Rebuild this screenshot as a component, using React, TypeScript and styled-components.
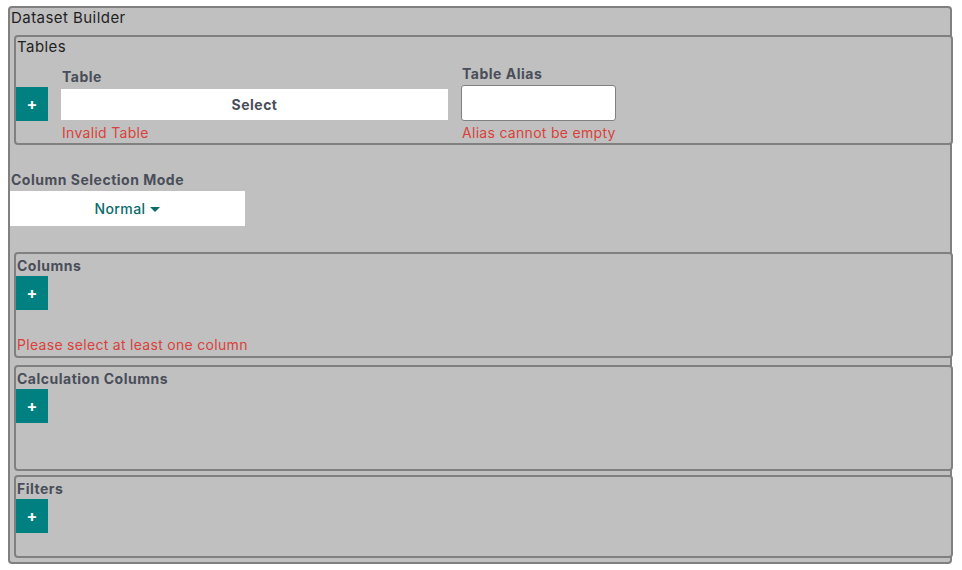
import React, { useState } from 'react'
import styled, { createGlobalStyle } from 'styled-components'

const GlobalStyle = createGlobalStyle`
  html, body {
    margin: 0;
    padding: 0;
    background: #ffffff;
  }
  body {
    font-family: Inter, "Liberation Sans", sans-serif;
    -webkit-font-smoothing: antialiased;
  }
`

const colors = {
  panel: '#c0c0c0',
  border: '#808080',
  label: '#4a4e59',
  text: '#1f1f1f',
  error: '#d9423c',
  teal: '#008080',
  tealText: '#0b6a6a',
}

const Page = styled.div`
  padding: 6px 10px 0 8px;
`

const Builder = styled.div`
  box-sizing: border-box;
  width: 100%;
  background: ${colors.panel};
  border: 2px solid ${colors.border};
  border-radius: 4px;
  padding-bottom: 4px;
`

const Title = styled.div`
  font-size: 15px;
  line-height: 19px;
  letter-spacing: 0.45px;
  color: ${colors.text};
  padding-left: 1px;
`

const Section = styled.div<{ $mt: number; $tail: number }>`
  box-sizing: border-box;
  margin: ${(p) => p.$mt}px -3px 0 4px;
  background: ${colors.panel};
  border: 2px solid ${colors.border};
  border-radius: 4px;
  padding: 3px 0 ${(p) => p.$tail}px 0;
  display: flex;
  flex-direction: column;
  align-items: flex-start;
`

const TablesHeader = styled(Title)`
  margin-top: -3px;
`

const SectionLabel = styled.div`
  font-size: 14px;
  line-height: 17px;
  font-weight: 700;
  letter-spacing: 0.5px;
  color: ${colors.label};
  padding-left: 1px;
`

const AddButton = styled.button<{ $mb?: number }>`
  width: 32px;
  height: 34px;
  margin: 2px 0 ${(p) => p.$mb || 0}px 0;
  padding: 0;
  border: none;
  border-radius: 0;
  background: ${colors.teal};
  color: #ffffff;
  font-family: inherit;
  font-size: 16px;
  font-weight: 700;
  line-height: 1;
  cursor: pointer;
  flex-shrink: 0;
`

const TableRow = styled.div`
  display: flex;
  align-items: flex-end;
  gap: 13px;
  margin-top: 10px;
`

const Field = styled.div<{ $width: number; $labelGap: number }>`
  display: flex;
  flex-direction: column;
  gap: ${(p) => p.$labelGap}px;
  width: ${(p) => p.$width}px;
`

const FieldLabel = styled.label`
  font-size: 14px;
  line-height: 16px;
  font-weight: 700;
  letter-spacing: 0.5px;
  color: ${colors.label};
  padding-left: 1px;
`

const ErrorText = styled.div<{ $mt?: number }>`
  font-size: 14px;
  line-height: 16px;
  letter-spacing: 0.3px;
  color: ${colors.error};
  margin-top: ${(p) => p.$mt || 0}px;
  padding-left: 1px;
  white-space: nowrap;
`

const SelectButton = styled.button`
  height: 31px;
  width: 100%;
  border: none;
  border-radius: 0;
  background: #ffffff;
  font-family: inherit;
  font-size: 14px;
  font-weight: 700;
  letter-spacing: 0.5px;
  color: ${colors.label};
  cursor: pointer;
`

const AliasInput = styled.input`
  box-sizing: border-box;
  height: 36px;
  width: 155px;
  border: 1px solid ${colors.border};
  border-radius: 3px;
  background: #ffffff;
  font-family: inherit;
  font-size: 14px;
  padding: 0 6px;
  outline: none;
`

const ModeBlock = styled.div`
  margin-top: 27px;
  display: flex;
  flex-direction: column;
  gap: 3px;
`

const ModeButton = styled.button`
  width: 235px;
  height: 35px;
  border: none;
  border-radius: 0;
  background: #ffffff;
  font-family: inherit;
  font-size: 14px;
  font-weight: 500;
  letter-spacing: 0.4px;
  color: ${colors.tealText};
  display: flex;
  align-items: center;
  justify-content: center;
  gap: 5px;
  cursor: pointer;
`

const Caret = styled.span`
  width: 0;
  height: 0;
  border-left: 5px solid transparent;
  border-right: 5px solid transparent;
  border-top: 5px solid ${colors.tealText};
  margin-top: 1px;
`

export default function App() {
  const [alias, setAlias] = useState('')
  const [mode] = useState('Normal')

  return (
    <Page>
      <GlobalStyle />
      <Builder>
        <Title>Dataset Builder</Title>

        <Section $mt={8} $tail={2}>
          <TablesHeader>Tables</TablesHeader>
          <TableRow>
            <AddButton $mb={20}>+</AddButton>
            <Field $width={387} $labelGap={4}>
              <FieldLabel>Table</FieldLabel>
              <SelectButton>Select</SelectButton>
              <ErrorText $mt={1}>Invalid Table</ErrorText>
            </Field>
            <Field $width={160} $labelGap={3}>
              <FieldLabel>Table Alias</FieldLabel>
              <AliasInput value={alias} onChange={(e) => setAlias(e.target.value)} />
              <ErrorText $mt={1}>Alias cannot be empty</ErrorText>
            </Field>
          </TableRow>
        </Section>

        <ModeBlock>
          <FieldLabel>Column Selection Mode</FieldLabel>
          <ModeButton>
            {mode}
            <Caret />
          </ModeButton>
        </ModeBlock>

        <Section $mt={26} $tail={3}>
          <SectionLabel>Columns</SectionLabel>
          <AddButton>+</AddButton>
          <ErrorText $mt={27}>Please select at least one column</ErrorText>
        </Section>

        <Section $mt={7} $tail={46}>
          <SectionLabel>Calculation Columns</SectionLabel>
          <AddButton>+</AddButton>
        </Section>

        <Section $mt={4} $tail={23}>
          <SectionLabel>Filters</SectionLabel>
          <AddButton>+</AddButton>
        </Section>
      </Builder>
    </Page>
  )
}
